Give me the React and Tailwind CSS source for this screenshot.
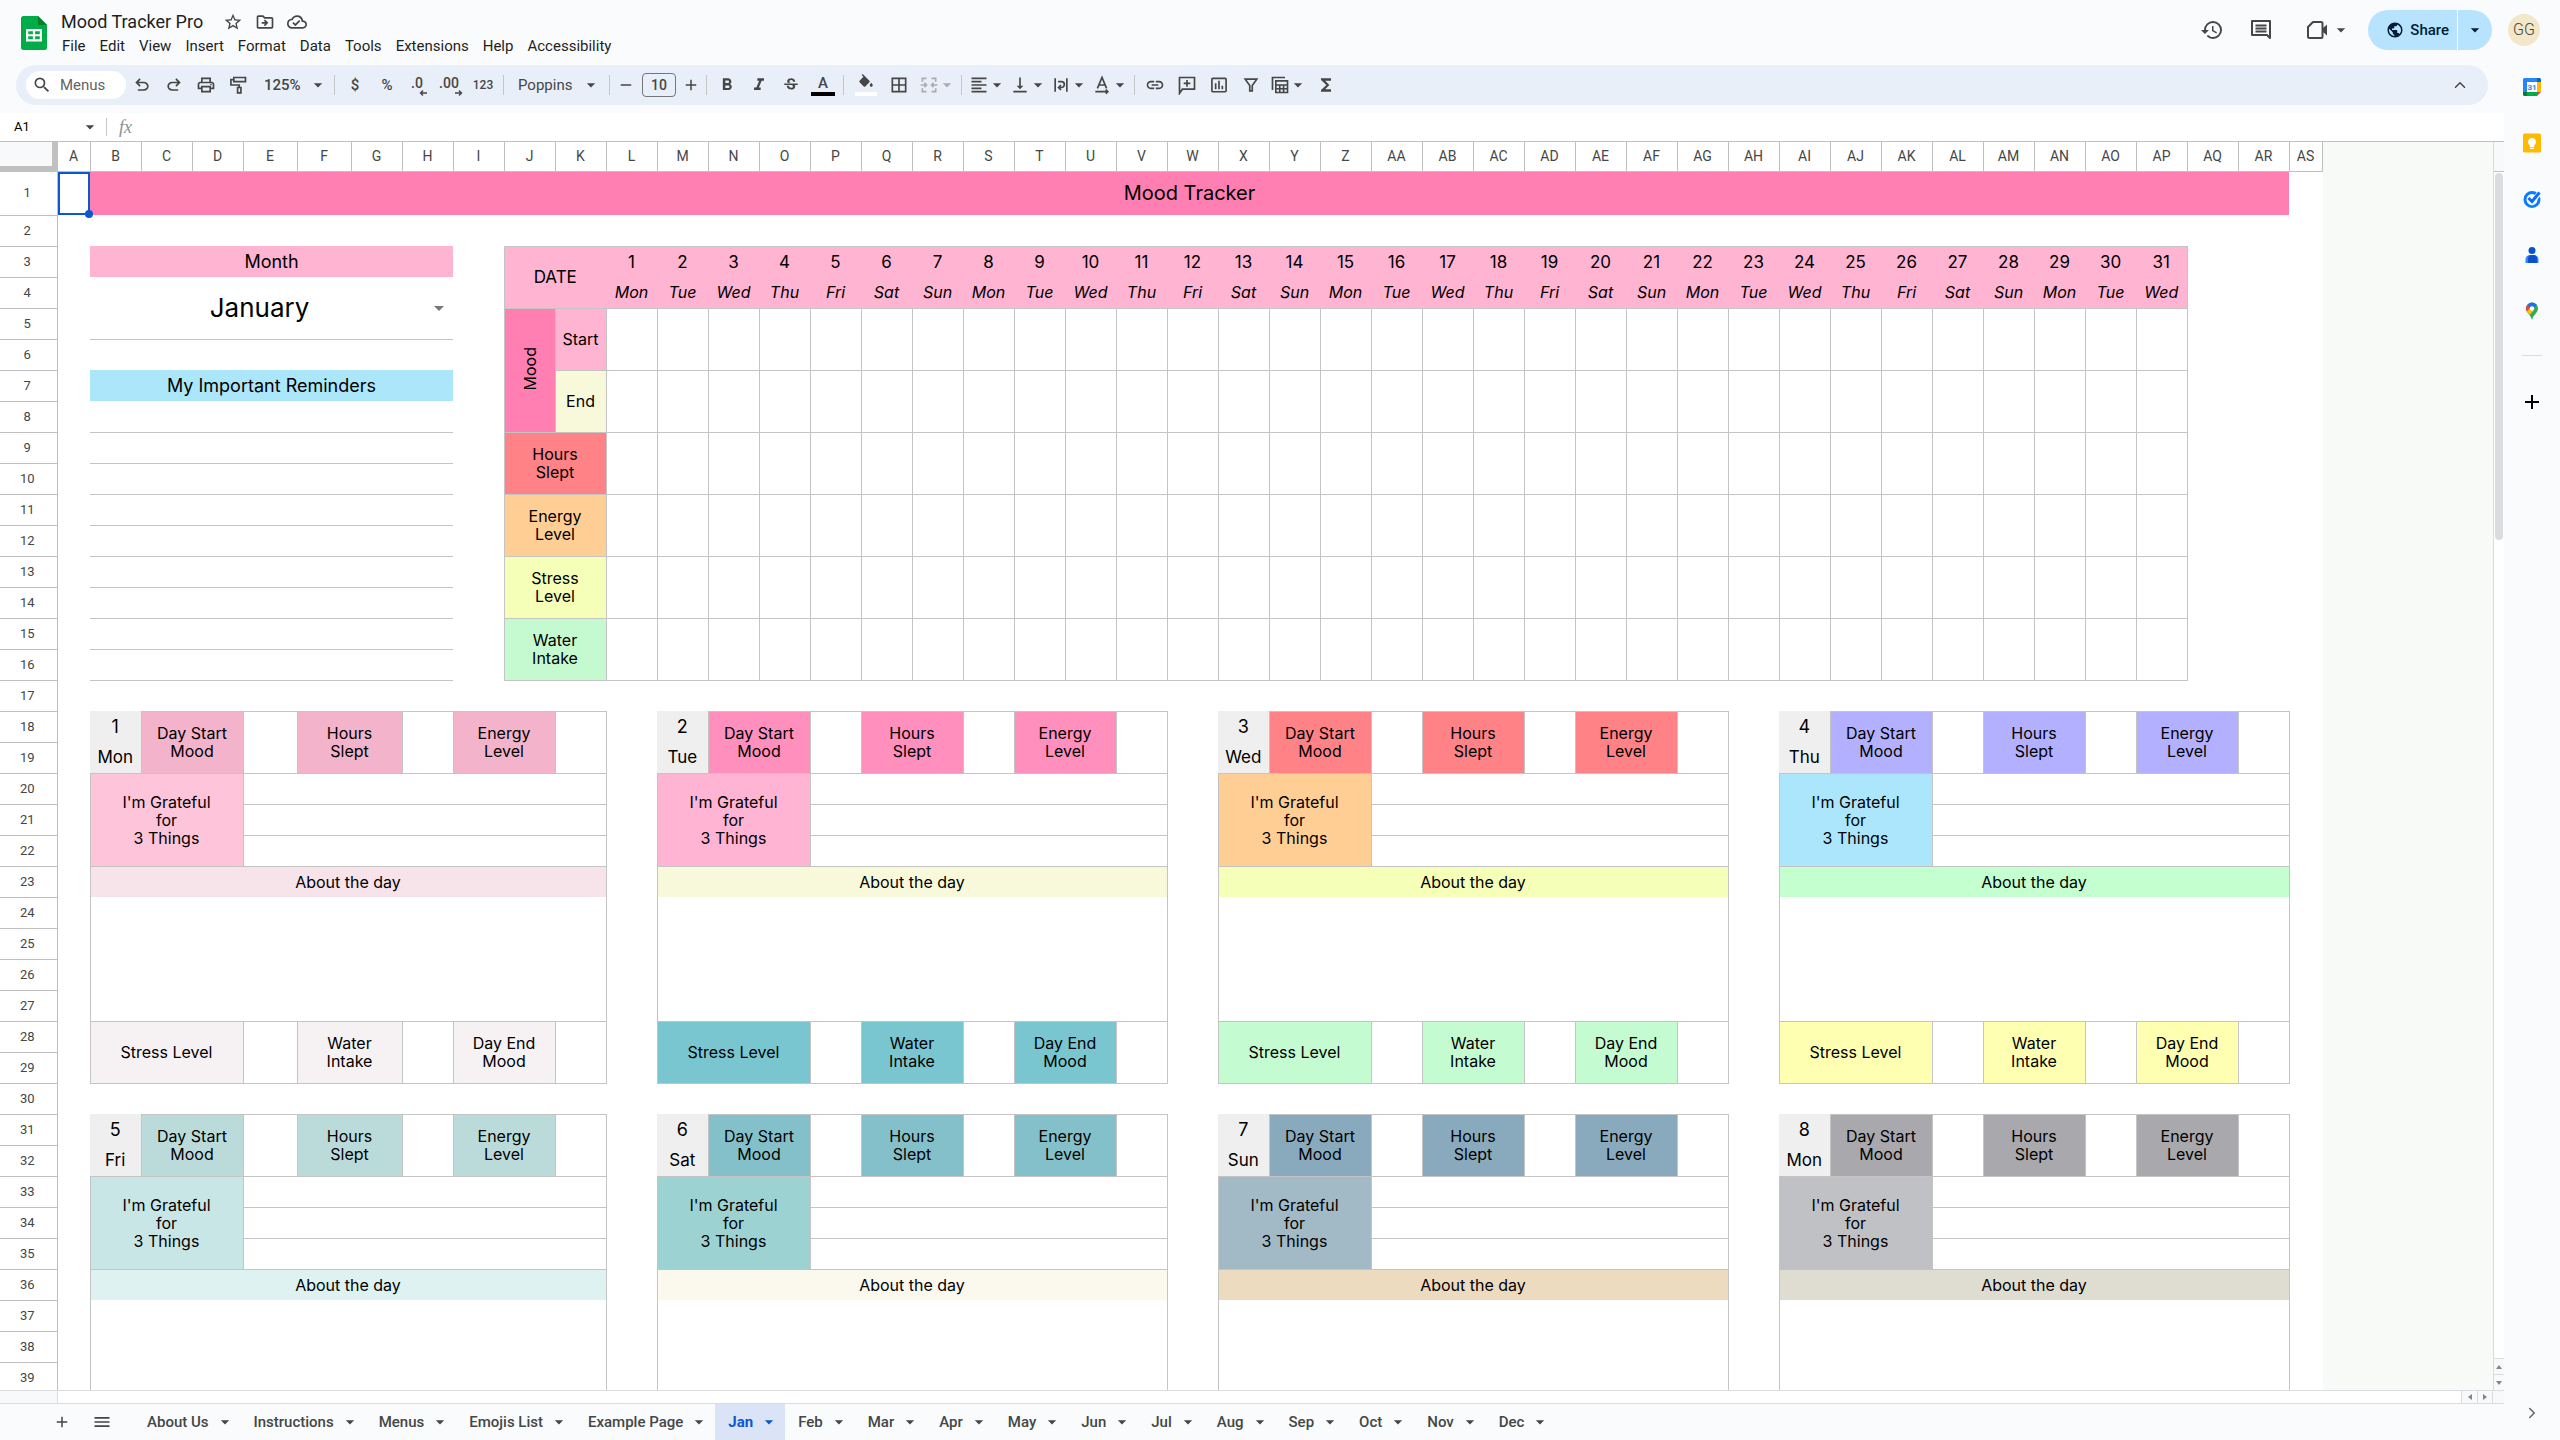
import { useState } from 'react';
import clsx from 'clsx';
import {
  MdAdd,
  MdArrowDropDown,
  MdBorderAll,
  MdFormatAlignLeft,
  MdFormatBold,
  MdFormatItalic,
  MdFunctions,
  MdHistory,
  MdInsertChartOutlined,
  MdLink,
  MdMenu,
  MdOutlineCloudDone,
  MdOutlineDriveFileMove,
  MdOutlinePrint,
  MdPublic,
  MdRemove,
  MdSearch,
  MdStarBorder,
  MdStrikethroughS,
  MdVerticalAlignBottom,
} from 'react-icons/md';
import { ChevronRight, ChevronUp } from 'lucide-react';

const menus = ['File', 'Edit', 'View', 'Insert', 'Format', 'Data', 'Tools', 'Extensions', 'Help', 'Accessibility'];

const tabs = [
  'About Us', 'Instructions', 'Menus', 'Emojis List', 'Example Page', 'Jan', 'Feb', 'Mar', 'Apr',
  'May', 'Jun', 'Jul', 'Aug', 'Sep', 'Oct', 'Nov', 'Dec',
];

const months = [
  'January', 'February', 'March', 'April', 'May', 'June', 'July', 'August',
  'September', 'October', 'November', 'December',
];

const weekdays = ['Mon', 'Tue', 'Wed', 'Thu', 'Fri', 'Sat', 'Sun'];

const ROWS = 39;
const COLS = 45;

const columnName = (index) => {
  const letter = String.fromCharCode(65 + (index % 26));
  return index < 26 ? letter : `A${letter}`;
};

const columnWidth = (index) => {
  if (index === 0 || index === COLS - 1) return 'w-[33px]';
  if (index === 4 || index === 5) return 'w-[54px]';
  return 'w-[51px]';
};

const sides = {
  all: 'border',
  bottom: 'border-b',
  x: 'border-x',
  noTop: 'border-x border-b',
  noBottom: 'border-x border-t',
};

const dayCards = [
  { row: 18, col: 1, top: 'bg-[#f2b3cb]', grateful: 'bg-[#fec4da]', about: 'bg-[#f7e3ea]', bottom: 'bg-[#f6f2f4]' },
  { row: 18, col: 12, top: 'bg-[#ff8fbd]', grateful: 'bg-[#ffb4d3]', about: 'bg-[#f8f9db]', bottom: 'bg-[#79c6d0]' },
  { row: 18, col: 23, top: 'bg-[#ff8386]', grateful: 'bg-[#ffce94]', about: 'bg-[#f5ffb8]', bottom: 'bg-[#c5fbd0]' },
  { row: 18, col: 34, top: 'bg-[#b3b0ff]', grateful: 'bg-[#ace6fd]', about: 'bg-[#c3ffcf]', bottom: 'bg-[#ffffb2]' },
  { row: 31, col: 1, top: 'bg-[#bbdbda]', grateful: 'bg-[#c9e6e7]', about: 'bg-[#ddf2f1]' },
  { row: 31, col: 12, top: 'bg-[#84c0c9]', grateful: 'bg-[#9dd2d2]', about: 'bg-[#fbf8ee]' },
  { row: 31, col: 23, top: 'bg-[#89aabc]', grateful: 'bg-[#a1bac6]', about: 'bg-[#eddbc0]' },
  { row: 31, col: 34, top: 'bg-[#a9a8ac]', grateful: 'bg-[#c0c1c4]', about: 'bg-[#dfddd2]' },
];

const cell = (row, col, rowSpan, colSpan, side, className, content) => ({
  row, col, rowSpan, colSpan, side, className, content,
});

const cardCells = ({ row, col, top, grateful, about, bottom }, index) => {
  const strip = (r, color, labels) =>
    labels.flatMap(([offset, span, label]) => [
      cell(r, col + offset, 2, span, 'all', color, label),
      cell(r, col + offset + span, 2, 1, 'all'),
    ]);

  const cells = [
    cell(row, col, 1, 1, null, 'bg-[#efefef] text-lg', index + 1),
    cell(row + 1, col, 1, 1, 'bottom', 'bg-[#efefef] text-[17px]', weekdays[index % 7]),
    ...strip(row, top, [[1, 2, 'Day Start\nMood'], [4, 2, 'Hours\nSlept'], [7, 2, 'Energy\nLevel']]),
    cell(row + 2, col, 3, 3, 'all', grateful, "I'm Grateful\nfor\n3 Things"),
    cell(row + 2, col + 3, 1, 7, 'all'),
    cell(row + 3, col + 3, 1, 7, 'all'),
    cell(row + 4, col + 3, 1, 7, 'all'),
    cell(row + 5, col, 1, 10, 'noBottom', about, 'About the day'),
  ];
  if (!bottom) return [...cells, cell(row + 6, col, 3, 10, 'x')];
  return [
    ...cells,
    cell(row + 6, col, 4, 10, 'noTop'),
    ...strip(row + 10, bottom, [[0, 3, 'Stress Level'], [4, 2, 'Water\nIntake'], [7, 2, 'Day End\nMood']]),
  ];
};

const MonthSelect = () => {
  const [month, setMonth] = useState('January');
  return (
    <div className="relative flex items-center">
      <select
        aria-label="Month"
        value={month}
        onChange={(e) => setMonth(e.target.value)}
        className="w-full appearance-none bg-transparent pr-6 text-center text-[26px] leading-8 [text-align-last:center]"
      >
        {months.map((name) => (
          <option key={name}>{name}</option>
        ))}
      </select>
      <MdArrowDropDown className="pointer-events-none absolute right-0.5 text-2xl text-[#777]" />
    </div>
  );
};

const sheetCells = [
  cell(1, 1, 1, 43, null, 'bg-[#ff7fb2] text-xl', 'Mood Tracker'),
  cell(3, 1, 1, 7, null, 'bg-[#ffb4d2] text-lg leading-[18px]', 'Month'),
  cell(4, 1, 2, 7, 'bottom', '', <MonthSelect />),
  cell(7, 1, 1, 7, null, 'bg-[#ace6fb] text-lg leading-[18px]', 'My Important Reminders'),
  ...Array.from({ length: 9 }, (_, i) => cell(8 + i, 1, 1, 7, 'bottom')),

  cell(3, 9, 2, 2, 'all', 'bg-[#ffb4d2] border-r-0 text-[17px]', 'DATE'),
  ...Array.from({ length: 31 }, (_, i) => [
    cell(3, 11 + i, 1, 1, null, clsx('bg-[#ffb4d2] border-t text-[17px]', i === 30 && 'border-r'), i + 1),
    cell(4, 11 + i, 1, 1, null, clsx('bg-[#ffb4d2] border-b italic', i === 30 && 'border-r'), weekdays[i % 7]),
    ...Array.from({ length: 6 }, (_, j) => cell(5 + j * 2, 11 + i, 2, 1, 'all')),
  ]).flat(),
  cell(5, 9, 4, 1, 'all', 'bg-[#ff7fb2]', <span className="inline-block rotate-180 [writing-mode:vertical-rl]">Mood</span>),
  cell(5, 10, 2, 1, 'all', 'bg-[#ffb4d2]', 'Start'),
  cell(7, 10, 2, 1, 'all', 'bg-[#f8f9db]', 'End'),
  cell(9, 9, 2, 2, 'all', 'bg-[#ff8386]', 'Hours\nSlept'),
  cell(11, 9, 2, 2, 'all', 'bg-[#ffce94]', 'Energy\nLevel'),
  cell(13, 9, 2, 2, 'all', 'bg-[#f6ffb8]', 'Stress\nLevel'),
  cell(15, 9, 2, 2, 'all', 'bg-[#c5fad0]', 'Water\nIntake'),
  ...dayCards.flatMap(cardCells),
];

// rows of cells, with the slots hidden by a merged cell left out
const buildRows = () => {
  const owner = new Map();
  sheetCells.forEach((item) => {
    for (let r = item.row; r < item.row + item.rowSpan; r++) {
      for (let c = item.col; c < item.col + item.colSpan; c++) owner.set(`${r}:${c}`, item);
    }
  });
  return Array.from({ length: ROWS }, (_, i) => {
    const row = i + 1;
    const cells = [];
    for (let col = 0; col < COLS; col++) {
      const item = owner.get(`${row}:${col}`);
      if (!item) cells.push(cell(row, col, 1, 1));
      else if (item.row === row && item.col === col) cells.push(item);
    }
    return { row, cells };
  });
};

const rows = buildRows();

const Glyph = ({ d, className }) => (
  <svg viewBox="0 0 24 24" className={clsx('size-5', className)} fill="currentColor" aria-hidden="true">
    <path d={d} />
  </svg>
);

const Outline = ({ children, className }) => (
  <svg viewBox="0 0 24 24" className={clsx('size-5', className)} fill="none" stroke="currentColor" strokeWidth="2" aria-hidden="true">
    {children}
  </svg>
);

const Caret = ({ className }) => <MdArrowDropDown className={clsx('-mx-0.5 size-5 shrink-0', className)} />;

const Divider = () => <span className="h-5 w-px shrink-0 bg-[#c4c7c5]" />;

const Tool = ({ label, className, children }) => (
  <button
    type="button"
    aria-label={label}
    className={clsx('flex h-7 shrink-0 items-center justify-center rounded font-medium', className ?? 'w-8')}
  >
    {children}
  </button>
);

const CaretTool = ({ label, className, children }) => (
  <Tool label={label} className={clsx('w-[41px]', className)}>
    {children}
    <Caret />
  </Tool>
);

const DecimalTool = ({ label, text, d }) => (
  <Tool label={label} className="w-8 text-sm">
    <span className="flex flex-col items-end pt-0.5">
      <span className="pr-1 leading-[13px]">{text}</span>
      <svg viewBox="0 0 8 6" className="h-1.5 w-2" fill="none" stroke="currentColor" strokeWidth="1.4" aria-hidden="true">
        <path d={d} />
      </svg>
    </span>
  </Tool>
);

const undoPath =
  'M7 19v-2h7.1q1.575 0 2.738-1T18 13.5t-1.162-2.5T14.1 10H7.8l2.6 2.6L9 14 4 9l5-5 1.4 1.4L7.8 8h6.3q2.425 0 4.163 1.575T20 13.5t-1.737 3.925T14.1 19z';

const SheetsLogo = () => (
  <svg viewBox="0 0 26 34" className="h-[34px] w-[26px]" aria-label="Sheets">
    <path d="M2.5 0H17l9 9v22.5a2.5 2.5 0 0 1-2.5 2.5h-21A2.5 2.5 0 0 1 0 31.500v-29A2.5 2.5 0 0 1 2.5 0Z" fill="#00ac47" />
    <path d="M17 0l9 9h-9Z" fill="#00832d" />
    <path
      d="M5 13v12.500h16V13Zm2.200 2.200h4.700v3h-4.700Zm6.900 0h4.700v3h-4.700Zm-6.900 5.100h4.700v3h-4.700Zm6.900 0h4.700v3h-4.700Z"
      fill="#fff"
      fillRule="evenodd"
    />
  </svg>
);

const Header = () => (
  <header className="flex h-[65px] shrink-0 items-start pr-5">
    <div className="flex pt-4 pl-[21px]">
      <SheetsLogo />
    </div>
    <div className="pt-2 pl-[6px]">
      <div className="flex h-7 items-center">
        <input
          aria-label="Document name"
          defaultValue="Mood Tracker Pro"
          className="w-[162px] bg-transparent pl-2 text-lg text-[#1f1f1f]"
        />
        <div className="flex items-center gap-3 pl-2 text-[#444746]">
          <button type="button" aria-label="Star"><MdStarBorder className="size-5" /></button>
          <button type="button" aria-label="Move"><MdOutlineDriveFileMove className="size-5" /></button>
          <button type="button" aria-label="Saved to Drive"><MdOutlineCloudDone className="size-5" /></button>
        </div>
      </div>
      <nav className="flex pl-0.5 text-[15px] text-[#1f1f1f]">
        {menus.map((name) => (
          <button key={name} type="button" className="px-[7px] leading-5">{name}</button>
        ))}
      </nav>
    </div>
    <div className="ml-auto flex items-center pt-2.5 text-[#444746]">
      <button type="button" aria-label="Version history" className="flex w-12 justify-center">
        <MdHistory className="size-6" />
      </button>
      <button type="button" aria-label="Comments" className="flex w-[50px] justify-center">
        <Outline className="size-6">
          <path d="M3 3h18v17l-3-3H3Z" strokeLinejoin="round" />
          <path d="M6.500 7.500h11M6.500 10.500h11M6.500 13.500h11" strokeWidth="1.800" />
        </Outline>
      </button>
      <button type="button" aria-label="Join a call" className="flex w-[82px] items-center justify-center">
        <Outline className="size-6">
          <path d="M8 4h8a1.500 1.500 0 0 1 1.500 1.500v13A1.500 1.500 0 0 1 16 20H4.500A1.500 1.500 0 0 1 3 18.500V9Z" strokeLinejoin="round" />
          <path d="M18 10l4-3.500v11L18 14Z" fill="currentColor" stroke="none" />
        </Outline>
        <Caret className="ml-0.5" />
      </button>
      <div className="flex h-10 overflow-hidden rounded-full bg-[#b8e3ff] text-[#001d35]">
        <button type="button" className="flex items-center gap-1.5 border-r border-white pr-2 pl-[18px] text-[15px] font-medium">
          <MdPublic className="size-[18px]" />
          Share
        </button>
        <button type="button" aria-label="Quick sharing actions" className="flex w-[34px] items-center justify-center">
          <Caret />
        </button>
      </div>
      <button type="button" aria-label="Account" className="ml-4 size-8 rounded-full bg-[#f3e7c9] text-base font-light text-[#444]">
        GG
      </button>
    </div>
  </header>
);

const Toolbar = () => (
  <div
    role="toolbar"
    aria-label="Main"
    className="mx-4 flex h-10 shrink-0 items-center rounded-full bg-[#e8eff9] px-2.5 text-[#444746]"
  >
    <label className="flex h-7 w-[100px] items-center gap-2 rounded-full bg-white pl-1.5">
      <MdSearch className="size-5 shrink-0" />
      <input aria-label="Menus" placeholder="Menus" className="w-14 text-[15px] placeholder:text-[#5f6368]" />
    </label>
    <Tool label="Undo"><Glyph d={undoPath} /></Tool>
    <Tool label="Redo"><Glyph className="-scale-x-100" d={undoPath} /></Tool>
    <Tool label="Print"><MdOutlinePrint className="size-5" /></Tool>
    <Tool label="Paint format">
      <Outline>
        <path d="M7 3h14v5H7ZM7 5.500H3.500V12h10v3" />
        <path d="M11.500 15h4v6.500h-4Z" />
      </Outline>
    </Tool>
    <button type="button" className="flex w-20 shrink-0 items-center justify-between pr-2 pl-2.5 text-[15px] font-medium">
      125%
      <Caret />
    </button>
    <Divider />
    <Tool label="Format as currency" className="ml-1 w-8 text-[15px]">$</Tool>
    <Tool label="Format as percent" className="w-8 text-[15px]">%</Tool>
    <DecimalTool label="Decrease decimal places" text=".0" d="M8 3H1.500M4 .5 1.500 3 4 5.500" />
    <DecimalTool label="Increase decimal places" text=".00" d="M0 3h6.500M4 .5 6.500 3 4 5.500" />
    <Tool label="More formats" className="mr-1 w-8 text-xs">123</Tool>
    <Divider />
    <button type="button" className="flex w-[105px] shrink-0 items-center justify-between pr-2.5 pl-3.5 text-[15px]">
      Poppins
      <Caret />
    </button>
    <Divider />
    <Tool label="Decrease font size"><MdRemove className="size-[18px]" /></Tool>
    <input
      aria-label="Font size"
      defaultValue="10"
      className="h-6 w-[34px] shrink-0 rounded border border-[#747775] text-center text-sm font-medium"
    />
    <Tool label="Increase font size" className="w-[30px]"><MdAdd className="size-[18px]" /></Tool>
    <Divider />
    <Tool label="Bold" className="ml-1 w-8"><MdFormatBold className="size-5" /></Tool>
    <Tool label="Italic"><MdFormatItalic className="size-5" /></Tool>
    <Tool label="Strikethrough"><MdStrikethroughS className="size-[18px]" /></Tool>
    <Tool label="Text color" className="mr-1 w-8">
      <span className="border-b-4 border-black px-[7px] text-[15px] leading-[18px]">A</span>
    </Tool>
    <Divider />
    <Tool label="Fill color" className="ml-1.5 w-8">
      <span className="border-b-4 border-white px-0.5">
        <Glyph
          className="size-[18px]"
          d="M16.560 8.940 7.620 0 6.210 1.410l2.380 2.380-5.150 5.150c-.59.59-.59 1.540 0 2.120l5.500 5.500c.29.29.68.44 1.060.44s.77-.15 1.060-.44l5.500-5.500c.59-.58.59-1.530 0-2.120zM19 11.500s-2 2.170-2 3.500c0 1.100.9 2 2 2s2-.9 2-2c0-1.330-2-3.500-2-3.500z"
        />
      </span>
    </Tool>
    <Tool label="Borders" className="w-[34px]"><MdBorderAll className="size-5" /></Tool>
    <CaretTool label="Merge cells" className="mr-1 text-[#a9adb2]">
      <Outline>
        <path d="M9 4H4v4M4 16v4h5M15 4h5v4M20 16v4h-5M2 12h7M6.500 9.500 9 12l-2.500 2.500M22 12h-7M17.500 9.500 15 12l2.500 2.500" />
      </Outline>
    </CaretTool>
    <Divider />
    <CaretTool label="Horizontal align" className="ml-1"><MdFormatAlignLeft className="size-5" /></CaretTool>
    <CaretTool label="Vertical align"><MdVerticalAlignBottom className="size-5" /></CaretTool>
    <CaretTool label="Text wrapping">
      <Outline>
        <path d="M5 4v16M19 4v16M8.500 8h4a3.500 3.500 0 0 1 0 7H10M12 12l-3 3 3 3" />
      </Outline>
    </CaretTool>
    <CaretTool label="Text rotation" className="mr-1">
      <Outline>
        <path d="M6.500 16 12 3l5.500 13M8.500 12h7M4 20h15M16.500 17.500 19 20l-2.500 2.500" />
      </Outline>
    </CaretTool>
    <Divider />
    <Tool label="Insert link" className="ml-1 w-8"><MdLink className="size-5" /></Tool>
    <Tool label="Insert comment">
      <Outline>
        <path d="M3 22V3h18v14H6.500ZM12 6v8M8 10h8" />
      </Outline>
    </Tool>
    <Tool label="Insert chart"><MdInsertChartOutlined className="size-5" /></Tool>
    <Tool label="Create a filter">
      <Outline>
        <path d="M5 5h14l-5.500 7.500V19h-3v-6.500Z" />
      </Outline>
    </Tool>
    <CaretTool label="Table views">
      <Outline>
        <path d="M3 18V3h15" />
        <path d="M7 7h14v14H7ZM7 12h14M7 16.500h14M11.700 12v9M16.300 12v9" />
      </Outline>
    </CaretTool>
    <Tool label="Functions" className="ml-0.5 w-8"><MdFunctions className="size-5" /></Tool>
    <button type="button" aria-label="Hide the menus" className="mr-[9px] ml-auto">
      <ChevronUp className="size-[18px]" />
    </button>
  </div>
);

const FormulaBar = () => (
  <div className="mt-2 flex h-[29px] shrink-0 items-center border-b border-[#c0c0c0] bg-white text-[#444746]">
    <input aria-label="Name box" defaultValue="A1" className="w-[82px] pl-3.5 text-[13px] text-black" />
    <Caret />
    <span className="ml-2 h-[18px] w-px bg-[#c4c7c5]" />
    <label htmlFor="formula" className="px-3 font-['Liberation_Serif',serif] text-lg leading-5 text-[#8b8f94] italic">fx</label>
    <input id="formula" className="min-w-0 flex-1" />
  </div>
);

const Sheet = () => (
  <div className="flex min-w-0 flex-1 overflow-hidden bg-[#f8faf8]">
    <table className="w-px shrink-0 table-fixed border-collapse self-start bg-white text-black">
      <colgroup>
        <col className="w-[57px]" />
        {Array.from({ length: COLS }, (_, i) => <col key={i} className={columnWidth(i)} />)}
      </colgroup>
      <thead>
        <tr className="h-[29px] text-sm text-[#444746]">
          <td className="relative border-r border-b border-[#c0c0c0] bg-[#f8f9fa] p-0">
            <span className="absolute inset-0 border-r-[5px] border-b-[5px] border-[#c0c0c0]" />
          </td>
          {Array.from({ length: COLS }, (_, i) => (
            <th key={i} scope="col" className="border-r border-b border-[#c0c0c0] p-0 font-normal">{columnName(i)}</th>
          ))}
        </tr>
      </thead>
      <tbody className="font-[Inter,sans-serif] text-base leading-[18px]">
        {rows.map(({ row, cells }) => (
          <tr key={row} className={row === 1 ? 'h-11' : 'h-[31px]'}>
            <th scope="row" className="border-r border-b border-[#c0c0c0] p-0 pr-0.5 font-[Roboto,sans-serif] text-[13px] font-normal text-[#444746]">
              {row}
            </th>
            {cells.map((item) => (
              <td
                key={item.col}
                rowSpan={item.rowSpan}
                colSpan={item.colSpan}
                className={clsx(
                  'border-[#c4c4c4] p-0 text-center align-middle whitespace-pre-line',
                  item.side && sides[item.side],
                  item.className,
                  row === 1 && item.col === 0 && 'relative',
                )}
              >
                {item.content}
                {row === 1 && item.col === 0 && (
                  <span className="absolute inset-0 border-2 border-[#0b57d0]">
                    <span className="absolute -right-[5px] -bottom-[5px] size-2 rounded-full bg-[#0b57d0]" />
                  </span>
                )}
              </td>
            ))}
          </tr>
        ))}
      </tbody>
    </table>
  </div>
);

const ScrollArrow = ({ d, label, className }) => (
  <button type="button" aria-label={label} className={clsx('flex items-center justify-center border-[#dadce0] bg-[#f8f9fa]', className)}>
    <svg viewBox="0 0 6 6" className="size-1.5" fill="#80868b"><path d={d} /></svg>
  </button>
);

const VerticalScroll = () => (
  <div className="flex w-[11px] shrink-0 flex-col border-l border-[#dadce0] bg-white">
    <div className="h-[30px] border-b border-[#c0c0c0] bg-[#f8f9fa]" />
    <div className="flex-1 px-px pt-px">
      <div className="h-[31%] rounded-full bg-[#dadce0]" />
    </div>
    <ScrollArrow label="Scroll up" className="h-4 border-t" d="M3 1l3 4H0z" />
    <ScrollArrow label="Scroll down" className="h-4 border-t" d="M3 5l3-4H0z" />
  </div>
);

const HorizontalScroll = () => (
  <div className="flex h-3.5 shrink-0 border-y border-[#dadce0] bg-white">
    <div className="w-[58px] border-r border-[#dadce0] bg-[#f8f9fa]" />
    <div className="flex-1" />
    <ScrollArrow label="Scroll left" className="w-4 border-l" d="M1 3l4-3v6z" />
    <ScrollArrow label="Scroll right" className="w-4 border-x" d="M5 3L1 0v6z" />
    <div className="w-[11px] bg-[#f8f9fa]" />
  </div>
);

const SheetTabs = () => {
  const [active, setActive] = useState('Jan');
  return (
    <div className="flex h-9 shrink-0 items-stretch pl-[42px] text-[#444746]">
      <button type="button" aria-label="Add sheet" className="flex w-10 items-center justify-center"><MdAdd className="size-[18px]" /></button>
      <button type="button" aria-label="All sheets" className="flex w-10 items-center justify-center"><MdMenu className="size-5" /></button>
      <div role="tablist" className="flex pl-3">
        {tabs.map((name) => (
          <button
            key={name}
            type="button"
            role="tab"
            aria-selected={name === active}
            onClick={() => setActive(name)}
            className={clsx(
              'flex items-center gap-2 pr-2 pl-[13px] text-[15px]',
              name === active ? 'bg-[#dbe4f6] font-bold text-[#0b57d0]' : 'font-medium',
            )}
          >
            {name}
            <Caret />
          </button>
        ))}
      </div>
    </div>
  );
};

const SidePanel = () => (
  <aside className="flex w-14 shrink-0 flex-col items-center gap-9 pt-3">
    <button type="button" aria-label="Calendar">
      <svg viewBox="0 0 20 20" className="size-5">
        <path d="M1 2.500A1.500 1.500 0 0 1 2.500 1H15v4H5v10H1Z" fill="#2684fc" />
        <path d="M15 1h2.500A1.500 1.500 0 0 1 19 2.500V5h-4Z" fill="#0066da" />
        <path d="M15 5h4v10h-4Z" fill="#ffba00" />
        <path d="M5 15h10v4H5Z" fill="#00ac47" />
        <path d="M1 15h4v4H2.500A1.500 1.500 0 0 1 1 17.500Z" fill="#00832d" />
        <path d="M15 15h4l-4 4Z" fill="#ea4335" />
        <path d="M5 5h10v10H5Z" fill="#fff" />
        <text x="10" y="13" textAnchor="middle" fontSize="8" fontWeight="700" fontFamily="Roboto" fill="#2684fc">31</text>
      </svg>
    </button>
    <button type="button" aria-label="Keep">
      <svg viewBox="0 0 20 20" className="size-5">
        <rect x="1" y="0.500" width="18" height="19" rx="1.500" fill="#ffba00" />
        <path d="M10 5a4 4 0 0 0-2.200 7.300V14h4.400v-1.700A4 4 0 0 0 10 5ZM8 14.800h4v1.200H8Z" fill="#fff" />
      </svg>
    </button>
    <button type="button" aria-label="Tasks">
      <svg viewBox="0 0 20 20" className="size-5" fill="none">
        <circle cx="10" cy="10.500" r="7" stroke="#0a7cff" strokeWidth="3" />
        <path d="M6.500 9.500 10 13l8-9.500" stroke="#f9fbfd" strokeWidth="5" />
        <path d="M6.500 9 10 12.500l7.500-9" stroke="#0a6cff" strokeWidth="3" />
      </svg>
    </button>
    <button type="button" aria-label="Contacts">
      <svg viewBox="0 0 20 20" className="size-5">
        <circle cx="10" cy="5.500" r="3.500" fill="#0057cc" />
        <path d="M3.500 18v-3.500A4.500 4.500 0 0 1 8 10h4a4.500 4.500 0 0 1 4.500 4.500V18Z" fill="#3086ff" />
        <path d="M6 18v-4a4 4 0 0 1 4-4h2a4 4 0 0 1 3 4v4Z" fill="#0c50cf" />
      </svg>
    </button>
    <button type="button" aria-label="Maps">
      <svg viewBox="0 0 20 20" className="size-5">
        <path d="M10 1.500a6 6 0 0 1 6 6c0 4.500-4.500 5.500-6 11.500-1.500-6-6-7-6-11.500a6 6 0 0 1 6-6Z" fill="#34a853" />
        <path d="M4.800 10.500C4.300 9.600 4 8.700 4 7.500c0-1.500.5-2.800 1.400-3.800l4.600 4Z" fill="#ea4335" />
        <path d="M5.400 3.700a6 6 0 0 1 9.500.2L10 9Z" fill="#1a73e8" />
        <path d="m4.800 10.500 3.200-3.500 3.500 3-4 4Z" fill="#fbbc04" />
        <circle cx="10" cy="7.500" r="2.200" fill="#fff" />
      </svg>
    </button>
    <span className="-my-0.5 h-px w-5 bg-[#dadce0]" />
    <button type="button" aria-label="Get add-ons" className="text-black"><MdAdd className="size-6" /></button>
    <button type="button" aria-label="Hide side panel" className="mt-auto mb-[18px] text-[#5f6368]">
      <ChevronRight className="size-[18px]" />
    </button>
  </aside>
);

export default function App() {
  return (
    <div className="flex h-screen flex-col overflow-hidden bg-[#f9fbfd] font-[Roboto,sans-serif]">
      <Header />
      <div className="flex min-h-0 flex-1">
        <main className="flex min-w-0 flex-1 flex-col">
          <Toolbar />
          <FormulaBar />
          <div className="flex min-h-0 flex-1">
            <Sheet />
            <VerticalScroll />
          </div>
          <HorizontalScroll />
          <SheetTabs />
        </main>
        <SidePanel />
      </div>
    </div>
  );
}
